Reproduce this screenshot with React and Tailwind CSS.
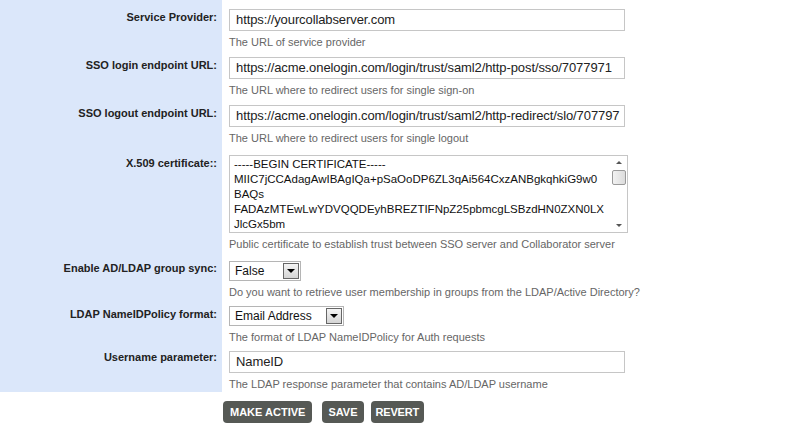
import React from 'react';

const certLines = [
  '-----BEGIN CERTIFICATE-----',
  'MIIC7jCCAdagAwIBAgIQa+pSaOoDP6ZL3qAi564CxzANBgkqhkiG9w0',
  'BAQs',
  'FADAzMTEwLwYDVQQDEyhBREZTIFNpZ25pbmcgLSBzdHN0ZXN0LX',
  'JlcGx5bm',
];

function Row({ label, top, labelTop, help, children }) {
  return (
    <div className="flex">
      <div
        className="w-[222px] shrink-0 bg-[#dbe7fa] pr-[5px] text-right text-[11px] font-bold leading-[14px] text-[#222]"
        style={{ paddingTop: labelTop }}
      >
        {label}
      </div>
      <div className="pl-[7px]" style={{ paddingTop: top }}>
        {children}
        <div className="mt-[4px] text-[11px] leading-[14px] text-[#666]">{help}</div>
      </div>
    </div>
  );
}

function TextInput({ value }) {
  return (
    <div className="h-[22px] w-[396px] overflow-hidden whitespace-nowrap border border-[#c6c6c6] bg-white pl-[6px] text-[13px] leading-[20px] tracking-[-0.1px] text-[#222]">
      {value}
    </div>
  );
}

function Select({ value, width }) {
  return (
    <div className="flex h-[20px] items-center justify-between border border-[#b5b5b5] bg-white pl-[5px] pr-[1px]" style={{ width }}>
      <span className="text-[12px] text-[#111]">{value}</span>
      <span className="flex h-[16px] w-[16px] items-center justify-center border border-[#666] bg-gradient-to-b from-[#f4f4f4] to-[#d4d4d4]">
        <span className="h-0 w-0 border-x-[4px] border-t-[4px] border-x-transparent border-t-black" />
      </span>
    </div>
  );
}

export default function App() {
  return (
    <div className="min-h-screen bg-white font-['Liberation_Sans',Arial,sans-serif]">
      <Row label="Service Provider:" top={9} labelTop={10} help="The URL of service provider">
        <TextInput value="https://yourcollabserver.com" />
      </Row>
      <Row label="SSO login endpoint URL:" top={8} labelTop={9} help="The URL where to redirect users for single sign-on">
        <TextInput value="https://acme.onelogin.com/login/trust/saml2/http-post/sso/7077971" />
      </Row>
      <Row label="SSO logout endpoint URL:" top={8} labelTop={9} help="The URL where to redirect users for single logout">
        <TextInput value="https://acme.onelogin.com/login/trust/saml2/http-redirect/slo/707797" />
      </Row>
      <Row label="X.509 certificate::" top={10} labelTop={11} help="Public certificate to establish trust between SSO server and Collaborator server">
        <div className="flex h-[78px] w-[399px] border border-[#c6c6c6] bg-white">
          <div className="flex-1 overflow-hidden pl-[4px] pt-[1px] text-[11.5px] leading-[15px] text-[#111]">
            {certLines.map((line, i) => (
              <div key={i} className="whitespace-nowrap">{line}</div>
            ))}
          </div>
          {/* scrollbar */}
          <div className="flex w-[17px] flex-col items-center justify-between py-[5px]">
            <div className="flex flex-col items-center">
              <span className="h-0 w-0 border-x-[3px] border-b-[3px] border-x-transparent border-b-[#555]" />
              <span className="mt-[6px] h-[15px] w-[14px] rounded-[2px] border border-[#9a9a9a] bg-gradient-to-r from-[#f2f2f2] to-[#dcdcdc]" />
            </div>
            <span className="h-0 w-0 border-x-[3px] border-t-[3px] border-x-transparent border-t-[#555]" />
          </div>
        </div>
      </Row>
      <Row label="Enable AD/LDAP group sync:" top={10} labelTop={10} help="Do you want to retrieve user membership in groups from the LDAP/Active Directory?">
        <Select value="False" width={72} />
      </Row>
      <Row label="LDAP NameIDPolicy format:" top={7} labelTop={8} help="The format of LDAP NameIDPolicy for Auth requests">
        <Select value="Email Address" width={115} />
      </Row>
      <Row label="Username parameter:" top={7} labelTop={6} help="The LDAP response parameter that contains AD/LDAP username">
        <TextInput value="NameID" />
      </Row>
      <div className="h-[1px] w-[222px] bg-[#dbe7fa]" />
      <div className="flex pl-[223px] pt-[9px]">
        <button className="h-[22px] rounded-[4px] bg-[#565955] px-[7px] text-[11px] font-bold text-white">MAKE ACTIVE</button>
        <button className="ml-[10px] h-[22px] rounded-[4px] bg-[#565955] px-[6px] text-[11px] font-bold text-white">SAVE</button>
        <button className="ml-[7px] h-[22px] rounded-[4px] bg-[#565955] px-[5px] text-[11px] font-bold tracking-[-0.2px] text-white">REVERT</button>
      </div>
    </div>
  );
}
